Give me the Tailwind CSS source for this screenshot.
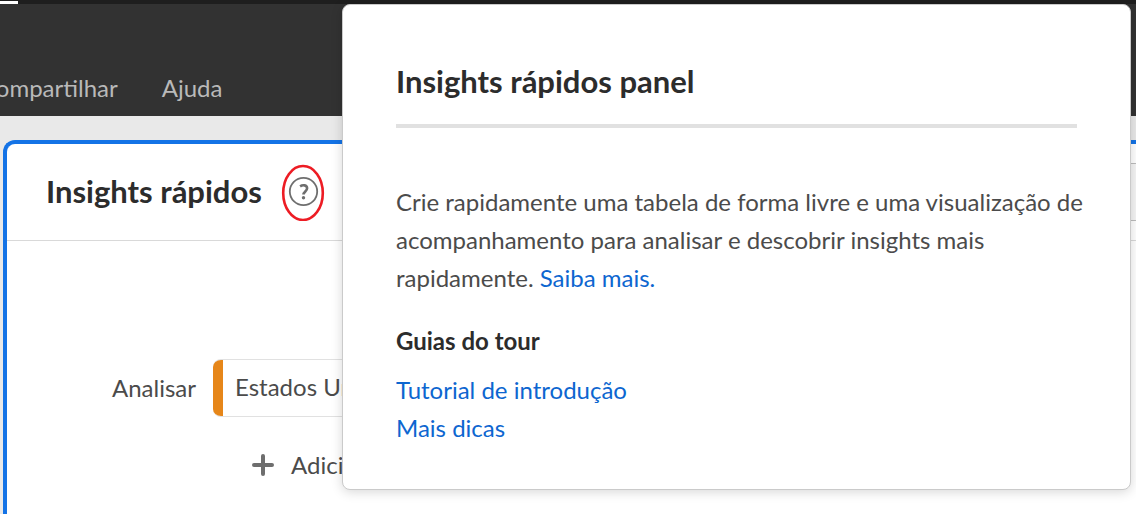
<!DOCTYPE html>
<html lang="pt-BR">
<head>
<meta charset="utf-8">
<meta name="viewport" content="width=device-width, initial-scale=1">
<title>Insights rápidos</title>
<script src="https://cdn.jsdelivr.net/npm/@tailwindcss/browser@4"></script>
</head>
<body class="relative min-h-screen flex flex-col overflow-hidden bg-[#e9e9e9] font-['Lato','Noto_Sans',sans-serif] text-2xl text-[#4b4b4b]">
  <header class="bg-[#323232]">
    <div class="h-1 bg-[#1e1e1e] pt-px"><div class="h-[3px] w-[18px] bg-white"></div></div>
    <nav class="flex h-28 items-end gap-11 pb-3 text-[#b9b9b9]">
      <a href="#compartilhar" class="-ml-5 leading-8">Compartilhar</a>
      <a href="#ajuda" class="leading-8">Ajuda</a>
    </nav>
  </header>

  <main class="flex flex-1 pt-6 pl-[3px]">
    <section class="flex-1 rounded-tl-xl border-t-4 border-l-4 border-[#1473e6] bg-white">
      <div class="flex h-[97px] items-center border-b border-[#d9d9d9] pl-[39px]">
        <h1 class="text-[31px] font-bold text-[#2c2c2c]">Insights rápidos</h1>
        <button type="button" aria-label="Ajuda do painel" class="ml-[19px]">
          <svg class="h-[58px] w-[44px]" viewBox="0 0 44 58" fill="none">
            <ellipse cx="22" cy="30" rx="19.800" ry="27" stroke="#ed1c24" stroke-width="2.600"/>
            <circle cx="22.500" cy="28.500" r="13.700" stroke="#6e6e6e" stroke-width="1.800"/>
            <path d="M19.100 23.300c2.600-1.700 7-1.500 7 2 0 3-3.600 3.300-3.600 6.300" stroke="#6e6e6e" stroke-width="2.600"/>
            <circle cx="22.500" cy="34.800" r="1.700" fill="#6e6e6e"/>
          </svg>
        </button>
        <button type="button" aria-label="Opções" class="ml-auto h-[58px] w-10 border-y border-[#bcbcbc] bg-[#f5f5f5]"></button>
      </div>
      <div class="pt-[118px] pl-[105px]">
        <div class="flex items-center">
          <label for="segmento" class="w-[101px]">Analisar</label>
          <div class="flex h-[58px] w-[420px] overflow-hidden rounded-lg border-y border-[#e1e1e1] bg-white">
            <span class="-my-px w-2.5 bg-[#e68619]"></span>
            <input id="segmento" value="Estados Unidos" class="min-w-0 flex-1 bg-transparent pb-0.5 pl-3 outline-none">
          </div>
        </div>
        <button type="button" class="mt-8 ml-[139px] flex items-center gap-4">
          <svg class="size-6" viewBox="0 0 24 24" fill="none" stroke="#6e6e6e" stroke-width="4" stroke-linecap="round"><path d="M12 3v18M3 12h18"/></svg>
          <span>Adicionar</span>
        </button>
      </div>
    </section>
  </main>

  <aside role="dialog" aria-labelledby="tour" class="absolute top-1 right-[5px] left-[342px] rounded-lg border border-[#cacaca] bg-white px-[53px] pt-[54px] pb-[42px] shadow-[0_2px_12px_rgba(0,0,0,0.16)]">
    <h2 id="tour" class="border-b-4 border-[#e1e1e1] pb-5 text-[31px] leading-[45px] font-bold text-[#2c2c2c]">Insights rápidos panel</h2>
    <p class="-mr-4 mt-[55px] leading-[38px]">Crie rapidamente uma tabela de forma livre e uma visualização de acompanhamento para analisar e descobrir insights mais <br>rapidamente. <a href="#saiba" class="text-[#0d66d0]">Saiba mais.</a></p>
    <h3 class="mt-[26px] leading-9 font-bold text-[#2c2c2c]">Guias do tour</h3>
    <ul class="mt-3 leading-[38px] text-[#0d66d0]">
      <li><a href="#tutorial">Tutorial de introdução</a></li>
      <li><a href="#dicas">Mais dicas</a></li>
    </ul>
  </aside>
</body>
</html>
